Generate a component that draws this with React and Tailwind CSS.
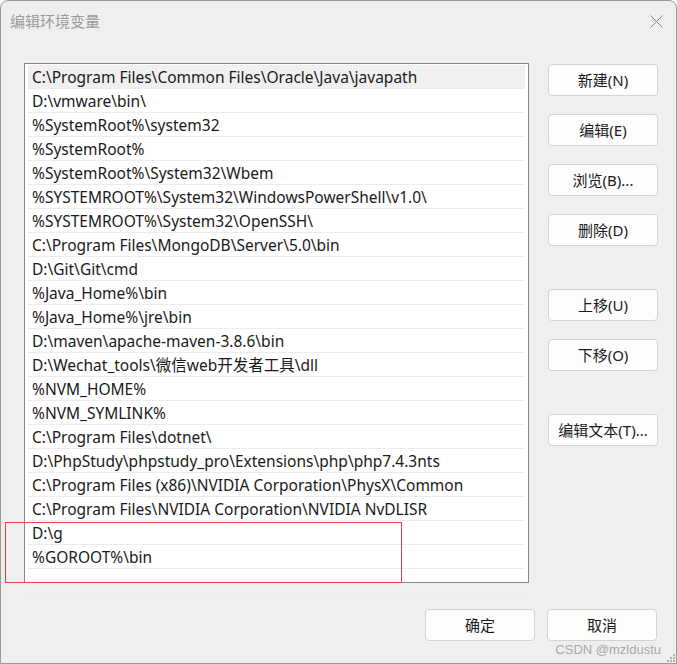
import React from 'react';

const paths = [
    'C:\\Program Files\\Common Files\\Oracle\\Java\\javapath',
    'D:\\vmware\\bin\\',
    '%SystemRoot%\\system32',
    '%SystemRoot%',
    '%SystemRoot%\\System32\\Wbem',
    '%SYSTEMROOT%\\System32\\WindowsPowerShell\\v1.0\\',
    '%SYSTEMROOT%\\System32\\OpenSSH\\',
    'C:\\Program Files\\MongoDB\\Server\\5.0\\bin',
    'D:\\Git\\Git\\cmd',
    '%Java_Home%\\bin',
    '%Java_Home%\\jre\\bin',
    'D:\\maven\\apache-maven-3.8.6\\bin',
    'D:\\Wechat_tools\\微信web开发者工具\\dll',
    '%NVM_HOME%',
    '%NVM_SYMLINK%',
    'C:\\Program Files\\dotnet\\',
    'D:\\PhpStudy\\phpstudy_pro\\Extensions\\php\\php7.4.3nts',
    'C:\\Program Files (x86)\\NVIDIA Corporation\\PhysX\\Common',
    'C:\\Program Files\\NVIDIA Corporation\\NVIDIA NvDLISR',
    'D:\\g',
    '%GOROOT%\\bin',
    '',
];

const font = "font-['Noto_Sans','Noto_Sans_CJK_SC',sans-serif]";

const Btn = ({ children, className = '' }) => (
    <div className={`w-[110px] h-[32px] flex items-center justify-center bg-[#fdfdfd] border border-[#d3d3d3] rounded-[4px] text-[15px] text-[#1a1a1a] ${className}`}>
        {children}
    </div>
);

const App = () => {
    return (
        <div className={`relative w-[677px] h-[664px] bg-[#efefef] border border-[#9a9a9a] rounded-t-[8px] overflow-hidden ${font}`}>
            <div className="h-[40px] flex items-center justify-between pl-[9px] pr-[13px]">
                <span className="text-[15px] text-[#9a9a9a]">编辑环境变量</span>
                <svg width="13" height="13" viewBox="0 0 13 13" stroke="#8a8a8a" strokeWidth="1">
                    <path d="M0.5 0.5 L12.5 12.5 M12.5 0.5 L0.5 12.5" />
                </svg>
            </div>
            <div className="flex pl-[23px] pt-[22px]">
                <div className="w-[505px] h-[520px] bg-white border border-[#828790] pt-[1px] px-[3px]">
                    {paths.map((p, i) => (
                        <div
                            key={i}
                            className={`h-[24px] flex items-center pl-[4px] pt-[2px] border-b border-[#ececec] text-[15.5px] text-[#1a1a1a] whitespace-nowrap ${i === 0 ? 'bg-[#f0f0f0]' : ''}`}
                        >
                            {p}
                        </div>
                    ))}
                </div>
                <div className="flex flex-col ml-[19px] pt-[1px]">
                    <Btn>新建(N)</Btn>
                    <Btn className="mt-[18px]">编辑(E)</Btn>
                    <Btn className="mt-[18px]">浏览(B)...</Btn>
                    <Btn className="mt-[18px]">删除(D)</Btn>
                    <Btn className="mt-[43px]">上移(U)</Btn>
                    <Btn className="mt-[18px]">下移(O)</Btn>
                    <Btn className="mt-[43px]">编辑文本(T)...</Btn>
                </div>
            </div>
            <div className="flex justify-end gap-[12px] pr-[19px] mt-[26px]">
                <Btn>确定</Btn>
                <Btn>取消</Btn>
            </div>
            <div className="absolute left-[4px] top-[521px] w-[397px] h-[61px] border border-[#f23c3c]" />
            <div className="absolute right-[15px] bottom-[4px] text-[13px] text-[#a8a8a8] font-['Liberation_Sans',sans-serif]">
                CSDN @mzldustu
            </div>
            <div className="absolute right-[1px] bottom-[1px] grid grid-cols-3 gap-[1px]">
                {[0, 0, 1, 0, 1, 1, 1, 1, 1].map((v, i) => (
                    <div key={i} className={`w-[2px] h-[2px] ${v ? 'bg-[#b0b0b0]' : ''}`} />
                ))}
            </div>
        </div>
    );
};

export default App;
